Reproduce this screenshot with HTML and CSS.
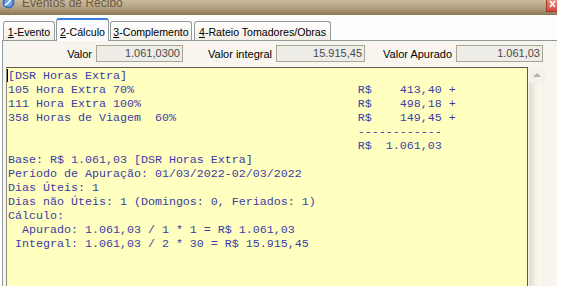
FILE: index.html
```html
<!DOCTYPE html>
<html lang="pt-BR">
<head>
    <meta charset="UTF-8">
    <title>Eventos de Recibo</title>
    <link rel="stylesheet" href="styles.css">
</head>
<body>
    <div class="window">
        <div class="titlebar">
            <svg class="app-icon" viewBox="0 0 14 14">
                <circle cx="7" cy="7" r="6.5" fill="#3d6fb8"/>
                <circle cx="7" cy="7" r="4.5" fill="#6fa2e0"/>
                <path d="M3 10 C6 9 8 6 10 3" stroke="#fff" stroke-width="1.6" fill="none"/>
            </svg>
            <span class="title">Eventos de Recibo</span>
            <span class="close"><svg viewBox="0 0 10 11"><path d="M3 1 L8 7 M8 1 L3 7" stroke="#fff" stroke-width="1.5"/></svg></span>
        </div>

        <div class="tabs">
            <div class="tab tab-evento"><u>1</u>-Evento</div>
            <div class="tab tab-calculo active"><u>2</u>-Cálculo</div>
            <div class="tab tab-complemento"><u>3</u>-Complemento</div>
            <div class="tab tab-rateio"><u>4</u>-Rateio Tomadores/Obras</div>
        </div>

        <div class="panel">
            <div class="fields">
                <label class="lbl lbl-valor">Valor</label>
                <div class="input in-valor">1.061,0300</div>
                <label class="lbl lbl-integral">Valor integral</label>
                <div class="input in-integral">15.915,45</div>
                <label class="lbl lbl-apurado">Valor Apurado</label>
                <div class="input in-apurado">1.061,03</div>
            </div>

            <div class="editor">
                <div class="memo">
                    <div class="line"><span class="caret"></span>[DSR Horas Extra]</div>
                    <div class="line"><span class="desc">105 Hora Extra 70%</span>R$    413,40 +</div>
                    <div class="line"><span class="desc">111 Hora Extra 100%</span>R$    498,18 +</div>
                    <div class="line"><span class="desc">358 Horas de Viagem  60%</span>R$    149,45 +</div>
                    <div class="line"><span class="desc"></span>------------</div>
                    <div class="line"><span class="desc"></span>R$  1.061,03</div>
                    <div class="line">Base: R$ 1.061,03 [DSR Horas Extra]</div>
                    <div class="line">Período de Apuração: 01/03/2022-02/03/2022</div>
                    <div class="line">Dias Úteis: 1</div>
                    <div class="line">Dias não Úteis: 1 (Domingos: 0, Feriados: 1)</div>
                    <div class="line">Cálculo:</div>
                    <div class="line">  Apurado: 1.061,03 / 1 * 1 = R$ 1.061,03</div>
                    <div class="line"> Integral: 1.061,03 / 2 * 30 = R$ 15.915,45</div>
                </div>
                <div class="scrollbar">
                    <div class="sb-up"><svg viewBox="0 0 16 16"><path d="M4 10 L8 6 L12 10 Z" fill="#b4b2aa"/></svg></div>
                    <div class="sb-track"></div>
                </div>
            </div>
        </div>
    </div>
</body>
</html>
```

FILE: styles.css
```css
body {
    margin: 0;
    background: #fff;
    font-family: 'Liberation Sans', Arial, sans-serif;
    font-size: 11px;
    color: #000;
    overflow: hidden;
    height: 286px;
}
.window {
    width: 557px;
}
.titlebar {
    height: 15px;
    display: flex;
    align-items: flex-start;
    overflow: hidden;
    background: linear-gradient(#cbbc9f 0%, #b29e7e 55%, #8d7453 100%);
}
.app-icon {
    width: 13px;
    height: 13px;
    margin: -4px 0 0 2px;
}
.title {
    margin: -4px 0 0 7px;
    font-size: 12px;
    line-height: 14px;
    color: #6b5b45;
}
.close {
    margin-left: auto;
    width: 10px;
    height: 11px;
    background: linear-gradient(#f08a7a, #d9473a);
    border-left: 1px solid #9c3b2e;
    border-bottom: 1px solid #9c3b2e;
}
.close svg {
    display: block;
    width: 10px;
    height: 11px;
}
.tabs {
    height: 25px;
    display: flex;
    align-items: flex-end;
    gap: 2px;
    padding-left: 3px;
    background: #fdfdfd;
}
.tab {
    box-sizing: border-box;
    height: 19px;
    padding-top: 2px;
    line-height: 16px;
    font-size: 10.6px;
    text-align: center;
    border: 1px solid #919b9c;
    border-bottom: none;
    border-radius: 3px 3px 0 0;
    background: linear-gradient(#ffffff, #f1efe6);
    white-space: nowrap;
}
.tab-evento { width: 52px; }
.tab-calculo { width: 51px; }
.tab-complemento { width: 82px; }
.tab-rateio { width: 137px; }
.tab.active {
    position: relative;
    width: 53px;
    height: 23px;
    padding-top: 4px;
    margin: 0 -1px -1px;
    border-top: 2px solid #3a7fdc;
    background: #fcfcfe;
}
.panel {
    margin-left: 2px;
    height: 245px;
    border-top: 1px solid #919b9c;
    border-left: 1px solid #919b9c;
    background: #f7f5ee;
}
.fields {
    display: flex;
    align-items: center;
    gap: 4px;
    padding: 4px 0 0 3px;
}
.lbl {
    text-align: right;
}
.lbl-valor { width: 86px; }
.lbl-integral { width: 85px; }
.lbl-apurado { width: 83px; }
.input {
    box-sizing: border-box;
    height: 17px;
    padding-right: 2px;
    line-height: 15px;
    text-align: right;
    color: #4b4b4b;
    background: #edece6;
    border: 1px solid #a8a597;
}
.in-valor { width: 87px; }
.in-integral { width: 89px; }
.in-apurado { width: 87px; }
.editor {
    display: flex;
    margin: 5px 0 0 3px;
}
.memo {
    box-sizing: border-box;
    width: 522px;
    height: 222px;
    padding: 1px 0 0 1px;
    overflow: hidden;
    background: #ffffc0;
    border: 1px solid #5c5a50;
    border-bottom: none;
    border-left-color: #8c8a7c;
    font-family: 'Liberation Mono', 'Courier New', monospace;
    font-size: 11.67px;
    line-height: 14px;
    color: #3c3ca6;
}
.line {
    height: 14px;
    white-space: pre;
}
.desc {
    display: inline-block;
    width: 50ch;
}
.caret {
    display: inline-block;
    width: 1px;
    height: 13px;
    margin-left: -1px;
    vertical-align: -3px;
    background: #000;
}
.scrollbar {
    width: 16px;
    margin-left: 1px;
    display: flex;
    flex-direction: column;
}
.sb-up {
    height: 16px;
    background: #f3f1ea;
}
.sb-up svg {
    display: block;
    width: 16px;
    height: 16px;
}
.sb-track {
    flex: 1;
    background: linear-gradient(90deg, #e2dccb 0%, #f4f1e6 40%, #faf8f1 70%, #f5f2e9 100%);
}
```
